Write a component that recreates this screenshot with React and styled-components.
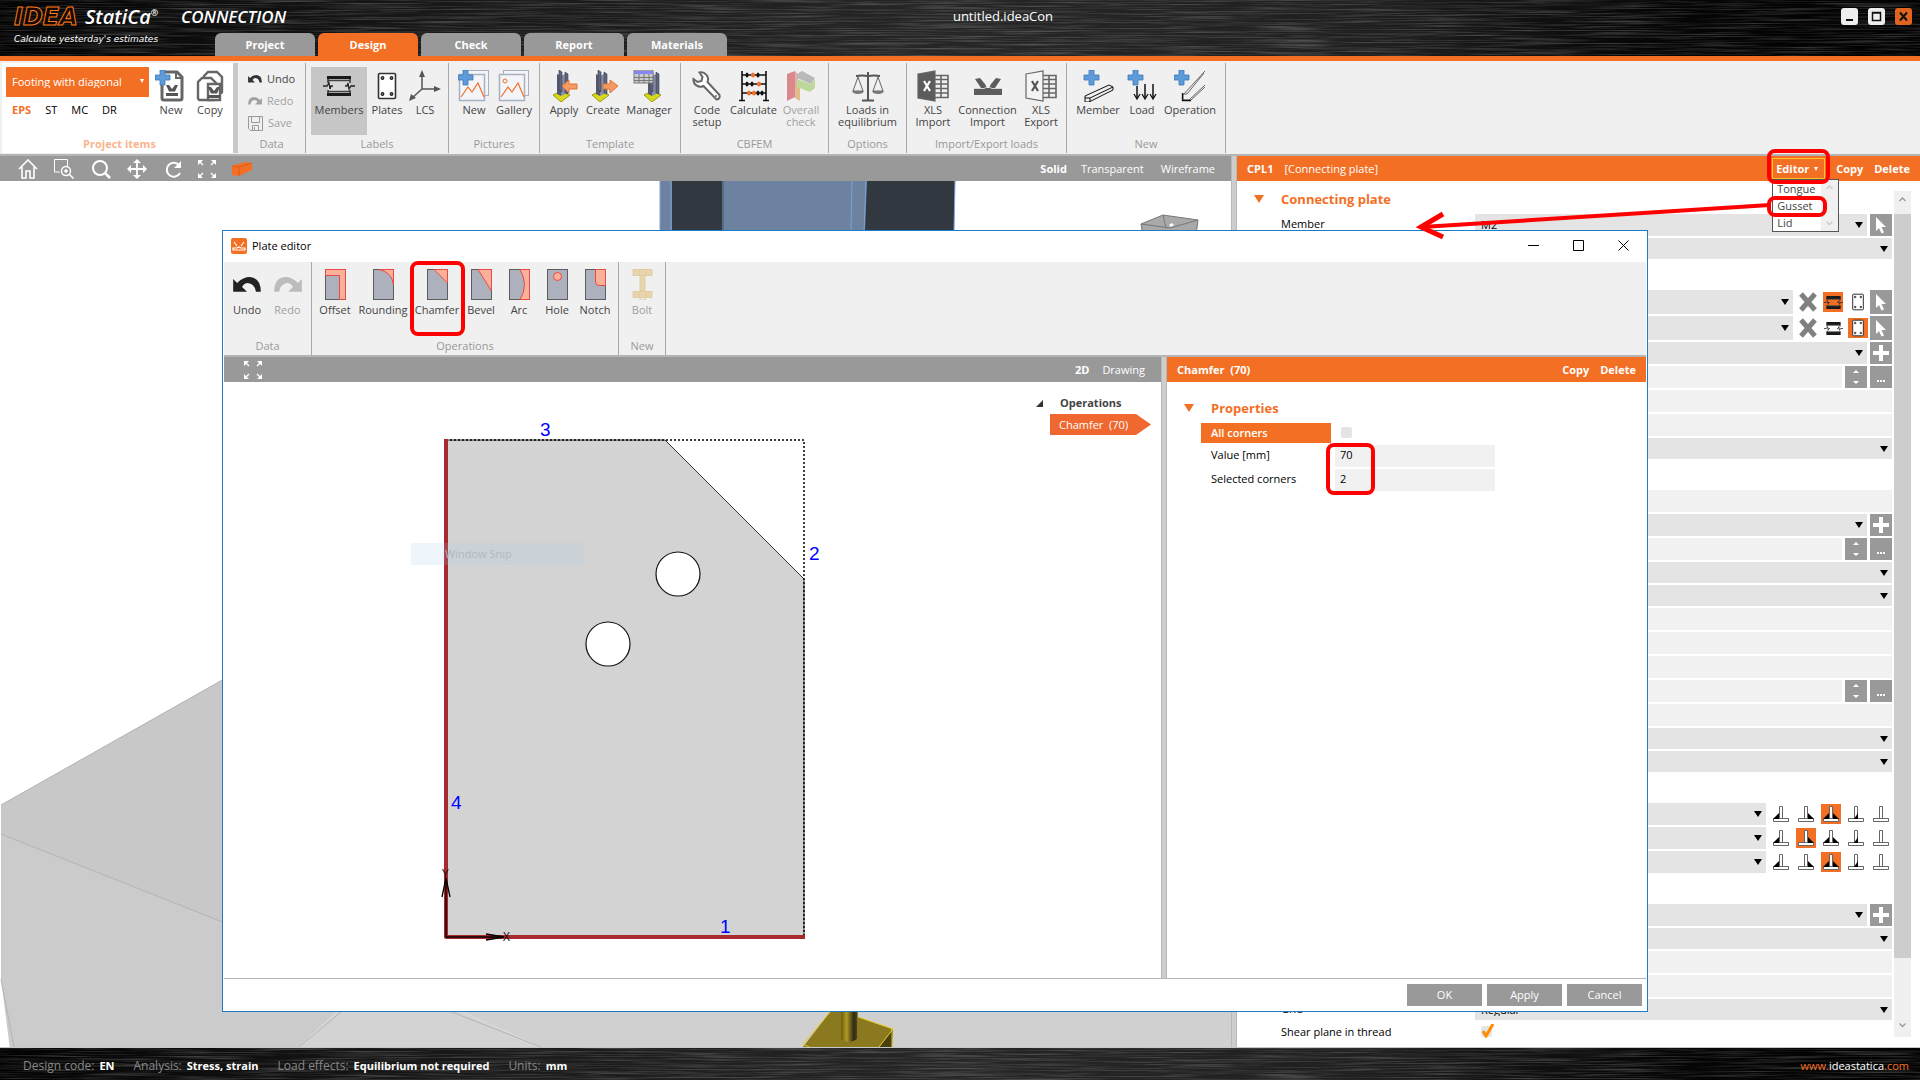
import React, { useState } from 'react';
import styled, { createGlobalStyle, css } from 'styled-components';

const orange = '#f36f24';
const grey = '#999999';
const red = '#ff0000';

const GlobalStyle = createGlobalStyle`
  * {
    box-sizing: border-box;
  }

  body {
    margin: 0;
    overflow: hidden;
    color: #444;
    background: #fff;
    font-family: "Open Sans", "Noto Sans", sans-serif;
    font-size: 11px;
    line-height: 12px;
  }

  button, input, select {
    font: inherit;
    color: inherit;
    margin: 0;
    padding: 0;
    border: 0;
    border-radius: 0;
    background: none;
    outline: none;
  }

  button {
    white-space: nowrap;
  }

  svg {
    display: block;
    flex: none;
  }

  ul {
    margin: 0;
    padding: 0;
    list-style: none;
  }
`;

const Page = styled.div`
  position: relative;
  display: flex;
  flex-direction: column;
  height: 100vh;
`;

/* Brushed metal bars */

const brushed = css`
  position: relative;
  background: linear-gradient(90deg, #020202 0%, #181818 22%, #262626 50%, #1f1f1f 72%, #060606 86%, #020202 100%);
`;

const TextureSvg = styled.svg`
  position: absolute;
  inset: 0;
  width: 100%;
  height: 100%;
`;

const Texture = ({ id }) => (
  <TextureSvg aria-hidden="true">
    <filter id={id} x="0" y="0" width="100%" height="100%">
      <feTurbulence type="fractalNoise" baseFrequency="0.012 0.85" numOctaves="3" seed="4" />
      <feColorMatrix values="0 0 0 0 1  0 0 0 0 1  0 0 0 0 1  2.4 0 0 0 -1" />
    </filter>
    <rect width="100%" height="100%" filter={`url(#${id})`} opacity="0.2" />
  </TextureSvg>
);

const Header = styled.header`
  ${brushed}
  height: 61px;
  border-bottom: 5px solid ${orange};
`;

const TitleRow = styled.div`
  position: relative;
  display: flex;
  height: 33px;
  color: #fff;
`;

const Brand = styled.div`
  width: 290px;
  padding: 4px 0 0 14px;
`;

const BrandName = styled.div`
  display: flex;
  align-items: center;
  height: 25px;
`;

const Idea = styled.span`
  width: 71px;
  font: italic bold 24px "DejaVu Sans", sans-serif;
  color: #140800;
  -webkit-text-stroke: 1px #ff7a1c;
`;

const Statica = styled.span`
  width: 96px;
  font: italic 600 20px "Open Sans", sans-serif;

  sup {
    font-size: 9px;
    vertical-align: 8px;
  }
`;

const Product = styled.span`
  font: italic 600 17px "Open Sans", sans-serif;
`;

const Tagline = styled.div`
  padding-top: 4px;
  font: italic 9px/12px "DejaVu Sans", sans-serif;
  white-space: nowrap;
`;

const FileName = styled.div`
  flex: 1;
  padding-top: 3px;
  font-size: 13px;
  line-height: 26px;
  text-align: center;
`;

const WindowButtons = styled.div`
  display: flex;
  justify-content: flex-end;
  gap: 10px;
  width: 204px;
  padding: 8px 8px 0 0;
`;

const WindowButton = styled.button`
  width: 17px;
  height: 17px;
  border-radius: 3px;
  color: #111;
  background: ${p => (p.$close ? '#e0641f' : '#eee')};
`;

const Tabs = styled.nav`
  position: relative;
  display: flex;
  gap: 3px;
  padding-left: 215px;
`;

const Tab = styled.button`
  width: 100px;
  height: 23px;
  border-radius: 6px 6px 0 0;
  color: #fff;
  font-weight: bold;
  background: ${p => (p.$active ? orange : grey)};
`;

/* Ribbon */

const RibbonBar = styled.div`
  display: flex;
  flex: none;
  padding: ${p => (p.$dialog ? '0' : '2px 0 1px')};
  border-bottom: 2px solid #b4b4b4;
  background: #f0f0f0;
`;

const Group = styled.section`
  display: flex;
  flex-direction: column;
  padding: 4px ${p => p.$pad ?? 5}px 0;
  border-right: 1px solid #a8a8a8;
`;

const GroupBody = styled.div`
  display: flex;
  height: ${p => (p.$tall ? 71 : 68)}px;
`;

const GroupName = styled.div`
  line-height: 18px;
  text-align: center;
  color: #999;
`;

const BigButton = styled.button`
  display: flex;
  flex-direction: column;
  align-items: center;
  gap: ${p => (p.$tall ? 4 : 2)}px;
  width: ${p => p.$w}px;
  padding-top: 3px;
  white-space: pre;
  color: ${p => (p.disabled ? '#a0a0a0' : '#444')};
  background: ${p => (p.$active ? '#c6c6c6' : 'none')};
  position: relative;

  svg {
    opacity: ${p => (p.disabled ? 0.55 : 1)};
  }
`;

const ProjectItems = styled.section`
  flex: none;
  width: 236px;
  margin-left: 2px;
  padding: 4px 0 0 4px;
  border-right: 5px solid #c8c8c8;
  background: #fff;
`;

const ProjectBody = styled.div`
  display: flex;
  height: 68px;
`;

const ProjectPick = styled.div`
  width: 145px;
  padding-right: 2px;
`;

const SelectBox = styled.div`
  position: relative;
  flex: 1;
  min-width: 0;

  select {
    display: block;
    width: 100%;
    height: 100%;
    padding: 0 6px;
    appearance: none;
    color: ${p => (p.$project ? '#fff' : '#000')};
    background: ${p => (p.$project ? orange : '#e4e4e4')};
  }

  &::after {
    content: "";
    position: absolute;
    right: ${p => (p.$project ? 5 : 4)}px;
    top: calc(50% - 3px);
    border: solid transparent;
    border-width: ${p => (p.$project ? '4px 2px 0' : '6px 4px 0')};
    border-top-color: ${p => (p.$project ? '#fff' : '#000')};
    pointer-events: none;
  }
`;

const ProjectSelect = styled(SelectBox)`
  height: 30px;
`;

const Kinds = styled.div`
  display: flex;
  gap: 14px;
  padding: 7px 6px;
`;

const Kind = styled.button`
  color: ${p => (p.$active ? orange : '#000')};
  font-weight: ${p => (p.$active ? 'bold' : 'normal')};
`;

const ProjectLabel = styled(GroupName)`
  color: #f9b48d;
  font-weight: bold;
`;

const SmallButtons = styled.div`
  display: flex;
  flex-direction: column;
  width: 57px;
  padding: 1px 0 0 5px;
`;

const SmallButton = styled.button`
  display: flex;
  align-items: center;
  gap: 5px;
  height: 22px;
  color: ${p => (p.disabled ? '#a0a0a0' : '#444')};
`;

/* Work area */

const Main = styled.main`
  display: flex;
  flex: 1;
  min-height: 0;
  border-bottom: 1px solid #c8c8c8;
`;

const Viewport = styled.section`
  display: flex;
  flex: 1;
  flex-direction: column;
  min-width: 0;
`;

const ViewBar = styled.div`
  display: flex;
  align-items: center;
  flex: none;
  height: 25px;
  padding: 0 16px;
  color: #fff;
  background: ${grey};
`;

const ViewIcon = styled.button`
  display: flex;
  justify-content: center;
  width: ${p => p.$w ?? 36}px;
`;

const ViewIcons = styled.div`
  display: flex;
  flex: 1;
  align-items: center;
  padding-left: ${p => p.$pad ?? 0}px;
`;

const ViewMode = styled.button`
  margin-left: ${p => p.$gap ?? 14}px;
  font-weight: ${p => (p.$active ? 'bold' : 'normal')};
`;

const Scene = styled.svg`
  flex: 1;
  width: 100%;
  min-height: 0;
`;

const Splitter = styled.div`
  flex: none;
  width: 6px;
  border: solid #b8b8b8;
  border-width: 0 1px;
  background: #cdcdcd;
`;

const Panel = styled.aside`
  display: flex;
  flex: none;
  flex-direction: column;
  width: ${p => p.$w};
`;

const PanelBar = styled.div`
  display: flex;
  align-items: center;
  flex: none;
  height: 25px;
  padding: 0 10px;
  color: #fff;
  background: ${orange};

  button {
    font-weight: bold;
  }
`;

const PanelTitle = styled.div`
  flex: 1;
  font-weight: bold;
  white-space: pre;

  span {
    padding-left: 11px;
    font-weight: normal;
  }
`;

const PanelAction = styled.button`
  margin-left: 11px;
`;

const EditorMenu = styled.div`
  position: relative;
  height: 21px;
`;

const EditorButton = styled.button`
  display: flex;
  align-items: center;
  justify-content: space-between;
  width: 53px;
  height: 21px;
  padding: 0 6px 0 3px;
  border: 1px solid #ffc423;

  &::after {
    content: "";
    border: solid transparent;
    border-width: 4px 2px 0;
    border-top-color: #fff;
  }
`;

const Popup = styled.div`
  position: absolute;
  z-index: 5;
  top: 21px;
  left: 0;
  display: flex;
  width: 67px;
  border: 1px solid #555;
  background: #fff;

  ul {
    flex: 1;
  }

  li {
    position: relative;
    height: 17px;
  }

  button {
    padding-left: 4px;
    color: #444;
    font-weight: normal;
    line-height: 17px;
  }
`;

const PopupScroll = styled.div`
  display: flex;
  flex-direction: column;
  justify-content: space-between;
  align-items: center;
  width: 17px;
  padding: 5px 0;
  background: #f0f0f0;
`;

const Mark = styled.span`
  position: absolute;
  z-index: 6;
  inset: ${p => p.$inset};
  border: 4px solid ${red};
  border-radius: 8px;
  pointer-events: none;
`;

const ArrowMark = styled.svg`
  position: absolute;
  z-index: 20;
  top: 42px;
  right: 100%;
  pointer-events: none;
`;

const PanelBody = styled.div`
  display: flex;
  flex: 1;
  min-height: 0;
  padding-right: 9px;
`;

const Fields = styled.div`
  flex: 1;
  min-width: 0;
  margin-bottom: 4px;
  overflow: hidden;
  padding: 0 2px 0 44px;
`;

const Heading = styled.h2`
  display: flex;
  align-items: center;
  gap: 17px;
  height: 33px;
  margin: 0 0 0 -27px;
  padding-top: 3px;
  color: ${orange};
  font-size: 13px;
  line-height: 18px;

  &::before {
    content: "";
    border: solid transparent;
    border-width: 8px 5px 0;
    border-top-color: ${orange};
  }
`;

const FieldSection = styled.div`
  margin-bottom: 31px;

  &:last-child {
    margin-bottom: 0;
  }
`;

const Row = styled.div`
  display: flex;
  height: ${p => p.$h ?? 22}px;
  color: #000;

  & + & {
    margin-top: 2px;
  }
`;

const RowLabel = styled.label`
  flex: none;
  width: 194px;
  line-height: 20px;
`;

const TextInput = styled.input`
  flex: 1;
  min-width: 0;
  padding: 0 5px 2px;
  background: #f1f1f1;
`;

const SquareButton = styled.button`
  display: flex;
  align-items: center;
  justify-content: center;
  width: 22px;
  margin-left: ${p => p.$gap ?? 3}px;
  color: #fff;
  background: ${grey};
`;

const IconSet = styled.div`
  display: flex;
  align-items: center;
  gap: 5px;
  padding: 0 ${p => p.$end ?? 1}px 0 5px;
`;

const IconButton = styled.button`
  display: flex;
  align-items: center;
  justify-content: center;
  width: 20px;
  height: 20px;
  background: ${p => (p.$active ? orange : 'none')};
`;

const Tick = styled.span`
  position: relative;
  padding: 4px 6px;

  input {
    display: block;
    width: 11px;
    height: 11px;
    border-radius: 2px;
    appearance: none;
    background: #e4e4e4;
  }

  svg {
    position: absolute;
    top: 2px;
    left: 7px;
    pointer-events: none;
  }
`;

const Scrollbar = styled.div`
  display: flex;
  flex-direction: column;
  flex: none;
  align-items: center;
  width: 17px;
  margin: 10px 0;
  background: #f0f0f0;
`;

const ScrollEnd = styled.button`
  display: flex;
  align-items: ${p => (p.$down ? 'center' : 'flex-start')};
  flex: none;
  height: 23px;
  padding: 6px 0;
`;

const Thumb = styled.div`
  flex: none;
  width: 17px;
  height: 88%;
  background: #cdcdcd;
`;

const Track = styled.div`
  flex: 1;
`;

/* Footer */

const Footer = styled.footer`
  ${brushed}
  display: flex;
  align-items: center;
  flex: none;
  height: 32px;
  padding: 4px 11px 0 23px;
  color: #888;

  dl {
    position: relative;
    display: flex;
    flex: 1;
    gap: 19px;
    margin: 0;
  }

  div {
    display: flex;
    gap: 5px;
  }

  dt {
    font-size: 12px;
  }

  dd {
    margin: 0;
    color: #fff;
    font-weight: bold;
  }

  a {
    position: relative;
    color: ${orange};
    font-size: 11px;
    text-decoration: none;
  }

  a span {
    color: #fff;
  }
`;

/* Plate editor window */

const Dialog = styled.div`
  position: absolute;
  z-index: 10;
  top: 230px;
  right: 272px;
  bottom: 68px;
  left: 222px;
  display: flex;
  flex-direction: column;
  padding: 0 1px;
  border: 1px solid #1b7cc9;
  background: #fff;
`;

const DialogTitle = styled.div`
  display: flex;
  align-items: center;
  gap: 5px;
  flex: none;
  height: 31px;
  padding: 0 17px 2px 7px;
  color: #000;
`;

const DialogName = styled.h1`
  flex: 1;
  margin: 0;
  font-size: 11px;
  font-weight: normal;
`;

const DialogControl = styled.button`
  margin-left: 29px;
`;

const DialogMain = styled.div`
  display: flex;
  flex: 1;
  min-height: 0;
  border-bottom: 1px solid #b4b4b4;
`;

const Canvas = styled.div`
  display: flex;
  flex: 1;
  min-height: 0;
`;

const PlateSvg = styled.svg`
  flex: 1;
  min-width: 0;
  height: 100%;
`;

const Tree = styled.div`
  width: 125px;
  padding-top: 13px;
`;

const TreeRoot = styled.div`
  display: flex;
  align-items: center;
  gap: 17px;
  height: 16px;
  color: #444;
  font-weight: bold;
`;

const TreeItem = styled.button`
  display: block;
  width: 101px;
  height: 21px;
  margin: 3px 0 0 14px;
  padding-left: 9px;
  color: #fff;
  text-align: left;
  white-space: pre;
  background: #f0682f;
  clip-path: polygon(0 0, 86px 0, 100% 50%, 86px 100%, 0 100%);
`;

const Properties = styled.div`
  padding: 8px 0 0 44px;
`;

const PropRow = styled.div`
  display: flex;
  width: 294px;
  height: 22px;
  margin: 0 0 2px -10px;
  color: #000;

  label {
    width: 130px;
    height: 20px;
    margin-right: 4px;
    padding-left: 10px;
    line-height: 20px;
    color: ${p => (p.$active ? '#fff' : '#000')};
    font-weight: ${p => (p.$active ? 600 : 'normal')};
    background: ${p => (p.$active ? orange : 'none')};
  }
`;

const PropRows = styled.div`
  position: relative;
  width: 284px;
  margin-top: -2px;
`;

const DialogButtons = styled.div`
  display: flex;
  justify-content: flex-end;
  gap: 5px;
  flex: none;
  padding: 5px 4px;

  button {
    width: 75px;
    height: 22px;
    color: #fff;
    background: ${grey};
  }
`;

/* Icons */

const Svg = ({ w = 32, h = w, children, ...rest }) => (
  <svg width={w} height={h} viewBox={`0 0 ${w} ${h}`} fill="none" aria-hidden="true" {...rest}>
    {children}
  </svg>
);

const Plus = ({ x = 0, y = 0 }) => (
  <path
    transform={`translate(${x} ${y})`}
    d="M5 0h5v5h5v5h-5v5H5v-5H0V5h5z"
    fill="#5f9bd8"
    stroke="#3a78bb"
    strokeWidth="0.8"
  />
);

const FileMark = ({ x, y }) => (
  <path transform={`translate(${x} ${y})`} d="M0 8h12v3H0zM0 0l3 0 3 4 3-4h3L9 6.500H3z" fill="#555" />
);

const NewFileIcon = () => (
  <Svg>
    <path d="M9 2h13l5 5v21q0 2-2 2H9q-2 0-2-2V4q0-2 2-2z" fill="#fff" stroke="#666" strokeWidth="3" />
    <path d="M21 2v6h6" stroke="#666" strokeWidth="2" />
    <FileMark x="11" y="15" />
    <Plus x="0" y="0" />
  </Svg>
);

const CopyIcon = () => (
  <Svg>
    <path d="M14 2h9l5 5v15q0 1-1 1H10V6z" fill="#fff" stroke="#666" strokeWidth="2.400" />
    <path d="M9 8h9l5 5v15q0 2-2 2H7q-2 0-2-2V12z" transform="translate(-1 0)" fill="#fff" stroke="#666" strokeWidth="2.400" />
    <path d="M14 14h12v16H14z" fill="#fff" stroke="#666" strokeWidth="2.400" />
    <FileMark x="14" y="17" />
  </Svg>
);

const MembersIcon = ({ size = 32 }) => (
  <svg width={size} height={size} viewBox="0 0 32 32" fill="none" aria-hidden="true">
    <path d={size < 32 ? 'M4 5h24v5H4zM4 22h24v5H4z' : 'M4 6h24v3H4zM4 23h24v3H4z'} fill="#1a1a1a" />
    <path d="M5 10h22v12H5z" fill={size < 32 ? 'none' : '#d8d8d8'} />
    <path d="M5 10.500h22M5 21.500h22" stroke="#444" strokeWidth="1.500" />
    <path d="M0 16h4l2-3 1 6 1-3h2M22 16h2l1-3 1 6 2-3h4M5 9v4M5 20v3M27 9v4M27 20v3" stroke="#222" strokeWidth="1.300" />
  </svg>
);

const PlatesIcon = ({ size = 32 }) => (
  <svg width={size} height={size} viewBox="0 0 32 32" fill="none" aria-hidden="true">
    <rect x="7.500" y="3.500" width="17" height="25" rx="1" fill="#fff" stroke="#333" strokeWidth="1.600" />
    <g fill="#888" stroke="#222" strokeWidth="1.200">
      <circle cx="11.500" cy="8" r="1.300" />
      <circle cx="20.500" cy="8" r="1.300" />
      <circle cx="11.500" cy="24" r="1.300" />
      <circle cx="20.500" cy="24" r="1.300" />
    </g>
  </svg>
);

const LcsIcon = () => (
  <Svg>
    <path d="M13 5v14h15M13 19L3 28" stroke="#555" strokeWidth="1.500" />
    <path d="M13 0l3 7h-6zM32 19l-7 3v-6zM0 31l2-7 5 4z" fill="#555" />
  </Svg>
);

const PictureIcon = ({ add }) => (
  <Svg>
    <rect x="5.500" y="0.500" width="25" height="25" fill="#f4f5f8" stroke="#a8b0c4" />
    <rect x="1.500" y="4.500" width="25" height="26" fill="#f4f5f8" stroke="#a8b0c4" strokeWidth="1.500" />
    <path d="M3 27L10 17l4 5 6-9 6 14" stroke={orange} strokeWidth="1.200" />
    {add ? <Plus /> : <circle cx="7" cy="11" r="2" stroke={orange} />}
  </Svg>
);

const ColumnShape = ({ x = 0 }) => (
  <g transform={`translate(${x} 0)`}>
    <path d="M2 25l8-4 9 4-9 7z" fill="#d7d81c" stroke="#9c9c14" />
    <path d="M6 4l4 2v20l-4-2z" fill="#555a70" />
    <path d="M10 6l4-2v20l-4 2z" fill="#8a8fa8" />
    <path d="M8 0l3 2v20l-3-2zM14 2l3 2v20l-3-1z" fill="#60657c" stroke="#3d4257" strokeWidth="0.600" />
  </g>
);

const ApplyIcon = () => (
  <Svg>
    <ColumnShape x={3} />
    <path d="M14 16l7-6v4h8v5h-8v4z" fill="#f59a62" stroke="#dd7637" />
  </Svg>
);

const CreateIcon = () => (
  <Svg>
    <ColumnShape x={3} />
    <path d="M31 16l-8-6v4h-7v5h7v4z" fill="#f59a62" stroke="#dd7637" />
  </Svg>
);

const ManagerIcon = () => (
  <Svg>
    <ColumnShape x={9} />
    <rect x="1" y="0" width="19" height="13" fill="#ccc" stroke="#777" />
    <path d="M1 1h19v3H1z" fill="#8686f2" />
    <path d="M1 7.500h19M1 10.500h19M6 4v9M11 4v9M16 4v9" stroke="#777" />
  </Svg>
);

const WrenchIcon = () => (
  <Svg>
    <path
      d="M9 2.500a7 7 0 0 1 8 9.500L29 25q1 4-3 4.500L13 16A7 7 0 0 1 3 9l4 3 4-1 1-4z"
      transform="translate(-0.500 0)"
      fill="#fff"
      stroke="#666"
      strokeWidth="2"
    />
    <circle cx="25" cy="26" r="1" fill="#666" />
  </Svg>
);

const AbacusIcon = () => (
  <Svg>
    <path d="M4 1v29M28 1v29M4 5h24M4 14h24M4 23h24M1 30.500h6M25 30.500h6" stroke="#111" strokeWidth="1.600" />
    <g fill="#111">
      <ellipse cx="9" cy="5" rx="1.500" ry="2.500" />
      <ellipse cx="20" cy="5" rx="1.500" ry="2.500" />
      <ellipse cx="9" cy="14" rx="1.500" ry="2.500" />
      <ellipse cx="14" cy="14" rx="1.500" ry="2.500" />
      <ellipse cx="20" cy="23" rx="1.500" ry="2.500" />
      <ellipse cx="24" cy="23" rx="1.500" ry="2.500" />
    </g>
    <g fill={orange}>
      <ellipse cx="15" cy="5" rx="2" ry="2.500" />
      <ellipse cx="21" cy="14" rx="2" ry="2.500" />
      <ellipse cx="11" cy="23" rx="2" ry="2.500" />
      <ellipse cx="16" cy="23" rx="2" ry="2.500" />
    </g>
  </Svg>
);

const OverallIcon = () => (
  <Svg>
    <path d="M2 4l8-3v26l-8 4z" fill="#c8343f" />
    <path d="M10 1l3 3v24l-3-1z" fill="#e2777c" />
    <path d="M10 12l5 3v16l-5-3z" fill="#d3903c" />
    <path d="M12 4l5-3 13 7-4 6-14-6z" fill="#8d8d8d" />
    <path d="M12 9l14 5 4-5v9l-5 4-13-5z" fill="#94c655" />
  </Svg>
);

const ScalesIcon = () => (
  <Svg>
    <path d="M16 2v28M10 30.500h12M4 6q6-1 12 0 6-1 12 0" stroke="#555" strokeWidth="2" />
    <path d="M6 7L1 21h10zM26 7l-5 14h10z" stroke="#666" />
    <path d="M0 21h12q-1 3-6 3t-6-3zM20 21h12q-1 3-6 3t-6-3z" fill="#777" />
  </Svg>
);

const XlsIcon = ({ outline }) => (
  <Svg>
    <path d="M17 5.500h14v22H17M17 9.500h14M17 14h14M17 18.500h14M17 23h14M24 5v22" stroke="#666" strokeWidth="1.600" />
    <path d="M1 4l17-3v30L1 28z" fill={outline ? '#f4f4f4' : '#5c5c5c'} stroke="#666" strokeWidth="1.200" />
    <path d="M7 11l6 10M13 11L7 21" stroke={outline ? '#555' : '#fff'} strokeWidth="2.200" />
  </Svg>
);

const ConnectionIcon = () => (
  <Svg>
    <path d="M2 18h28v7H2zM3 9l5-1 5 6 2 4h2l2-4 5-6 5 1-6 9H9z" fill="#5c5c5c" />
    <path d="M2 18.500h10l4-2 4 2h10" stroke="#f0f0f0" strokeWidth="0.800" />
  </Svg>
);

const MemberIcon = () => (
  <Svg>
    <path d="M3 28v4h4l24-12v-3l-4-2L3 26z" fill="#eee" stroke="#111" />
    <path d="M3 28h5v4M8 28l23-11" stroke="#111" />
    <Plus x="2" />
  </Svg>
);

const LoadIcon = () => (
  <Svg>
    <path d="M11 16v12M19 14v14M27 14v14" stroke="#111" strokeWidth="1.500" />
    <path d="M8 24l3 5 3-5M16 24l3 5 3-5M24 24l3 5 3-5" stroke="#111" strokeWidth="1.300" />
    <Plus x="2" />
  </Svg>
);

const OperationIcon = () => (
  <Svg>
    <path d="M31 1L9 25v5h6L31 15M9 24h4l17-21M17 30L31 17" stroke="#666" />
    <path d="M8.500 23v7.500H17" stroke="#111" strokeWidth="1.300" />
    <Plus x="0" />
  </Svg>
);

const ARROW_SHAPE = 'M0 2l4 4Q10 0 17 0q11 1 11 15h-5Q22 7 15 6q-4 0-6 4l5 5H0z';

const UndoIcon = ({ w = 14, fill = '#333' }) => (
  <svg width={w} height={w * 0.6} viewBox="0 0 28 17" aria-hidden="true">
    <path d={ARROW_SHAPE} fill={fill} />
  </svg>
);

const RedoIcon = ({ w = 14, fill = '#a0a0a0' }) => (
  <svg width={w} height={w * 0.6} viewBox="0 0 28 17" aria-hidden="true">
    <path d={ARROW_SHAPE} fill={fill} transform="matrix(-1 0 0 1 28 0)" />
  </svg>
);

const SaveIcon = () => (
  <Svg w={15}>
    <path d="M0.500 0.500h14v14h-12l-2-2zM3.500 0.500v6h8v-6M4.500 14.500v-5h6v5M6.500 11v3" stroke="#999" />
  </Svg>
);

const HomeIcon = () => (
  <Svg w={20}>
    <path d="M1 10l9-9 9 9M4 8v11h4v-7h4v7h4V8" stroke="#fff" strokeWidth="1.600" />
  </Svg>
);

const ZoomWindowIcon = () => (
  <Svg w={20}>
    <path d="M6 13H0.500V0.500h13V8" stroke="#fff" />
    <circle cx="12" cy="12" r="4.500" stroke="#fff" strokeWidth="1.500" />
    <path d="M12 10v4M10 12h4M15 15l4.500 4.500" stroke="#fff" strokeWidth="1.500" />
  </Svg>
);

const SearchIcon = () => (
  <Svg w={20}>
    <circle cx="9" cy="9" r="7" stroke="#fff" strokeWidth="2" />
    <path d="M14 14l5 5" stroke="#fff" strokeWidth="2.500" />
  </Svg>
);

const MoveIcon = () => (
  <Svg w={20}>
    <path d="M10 2v16M2 10h16" stroke="#fff" strokeWidth="1.800" />
    <path d="M10 0l4 4H6zM10 20l4-4H6zM0 10l4-4v8zM20 10l-4-4v8z" fill="#fff" />
  </Svg>
);

const RotateIcon = () => (
  <Svg w={20}>
    <path d="M15 6a7 7 0 1 0 1 8" stroke="#fff" strokeWidth="2" />
    <path d="M17 2v7h-7z" fill="#fff" />
  </Svg>
);

const ExpandIcon = () => (
  <Svg w={20}>
    <path d="M2 2l4 4M18 2l-4 4M2 18l4-4M18 18l-4-4" stroke="#fff" strokeWidth="1.400" />
    <path d="M1 1h5L1 6zM19 1h-5l5 5zM1 19h5l-5-5zM19 19h-5l5-5z" fill="#fff" />
  </Svg>
);

const SolidIcon = () => (
  <Svg w={20} h={14}>
    <path d="M0 4l13-4 7 1v7l-13 6-7-1z" fill={orange} />
    <path d="M0 4l7 1v9M7 5l13-4" stroke="#d85e18" />
  </Svg>
);

const CursorIcon = () => (
  <Svg w={12} h={18}>
    <path d="M1 1v14l3-3 2.500 5.500 2.500-1L6.500 11H11z" fill="#fff" />
  </Svg>
);

const AddIcon = () => (
  <Svg w={16}>
    <path d="M6 0h4v6h6v4h-6v6H6v-6H0V6h6z" fill="#fff" />
  </Svg>
);

const SpinIcon = () => (
  <Svg w={6} h={16}>
    <path d="M0 4l3-3 3 3zM0 12l3 3 3-3z" fill="#fff" />
  </Svg>
);

const DotsIcon = () => (
  <Svg w={8} h={10}>
    <path d="M0 8h2v2H0zM3 8h2v2H3zM6 8h2v2H6z" fill="#fff" />
  </Svg>
);

const CrossIcon = () => (
  <Svg w={20}>
    <path d="M3 2l14 16M17 2L3 18" stroke="#808080" strokeWidth="5" />
  </Svg>
);

const Chevron = ({ down, color = '#999' }) => (
  <Svg w={7} h={5}>
    <path d={down ? 'M0.500 0.500l3 3 3-3' : 'M0.500 4l3-3 3 3'} stroke={color} strokeWidth="1.300" />
  </Svg>
);

// Fillet drawn beside the stem: left, right, both, bevel, none
const WELDS = ['M6 7v6H0z', 'M10 7v6h6z', 'M6 7v6H0zM10 7v6h6z', 'M10 7v6H6z', ''];

const WeldIcon = ({ kind }) => (
  <Svg w={16}>
    <path d="M6.500 0.500h3v12h6v3h-15v-3h6z" fill="#fff" stroke="#666" />
    <path d="M0.500 12.500h15" stroke="#666" />
    <path d={WELDS[kind]} fill="#000" />
  </Svg>
);

const CUTS = {
  Offset: 'M0.500 0.500h20v30h-6V6.500h-14z',
  Rounding: 'M6 0.500h14.500V16Q19 3 6 0.500z',
  Chamfer: 'M7 0.500h13.500V14z',
  Bevel: 'M7 0.500h13.500V22z',
  Arc: 'M11 0.500h9.500v30H11Q20 16 11 0.500z',
  Hole: 'M10.500 3.500a4 4 0 1 1 0 8 4 4 0 1 1 0-8z',
  Notch: 'M10.500 0.500h10v16H15q-4.500 0-4.500-4.500z',
};

const CutIcon = ({ name }) => (
  <Svg w={21} h={31}>
    <rect x="0.500" y="0.500" width="20" height="30" fill="#adb1bd" stroke="#5c5c5c" />
    <path d={CUTS[name]} fill="#fbb09a" stroke="#e84a45" />
  </Svg>
);

const BoltIcon = () => (
  <Svg w={21} h={31}>
    <path d="M8 6h5v16H8z" fill="#e5c078" stroke="#d6ae62" />
    <path d="M1 0.500h19v6H1zM1 22.500h19v6H1z" fill="#e5c078" stroke="#d6ae62" />
    <path d="M7 0v6M14 0v6M7 22v6M14 22v6M8 28v3h5v-3" stroke="#d6ae62" />
  </Svg>
);

const AppIcon = () => (
  <Svg w={16}>
    <rect width="16" height="16" rx="2" fill={orange} />
    <path d="M2 10h4l2-1 2 1h4v2H2zM3 4l3 4M13 4l-3 4" stroke="#fff" strokeWidth="1.200" />
  </Svg>
);

/* Content */

const TABS = ['Project', 'Design', 'Check', 'Report', 'Materials'];

const RIBBON = [
  {
    name: 'Labels',
    items: [
      { label: 'Members', w: 56, icon: <MembersIcon />, active: true },
      { label: 'Plates', w: 40, icon: <PlatesIcon /> },
      { label: 'LCS', w: 36, icon: <LcsIcon /> },
    ],
  },
  {
    name: 'Pictures',
    items: [
      { label: 'New', w: 40, icon: <PictureIcon add /> },
      { label: 'Gallery', w: 40, icon: <PictureIcon /> },
    ],
  },
  {
    name: 'Template',
    items: [
      { label: 'Apply', w: 38, icon: <ApplyIcon /> },
      { label: 'Create', w: 40, icon: <CreateIcon /> },
      { label: 'Manager', w: 52, icon: <ManagerIcon /> },
    ],
  },
  {
    name: 'CBFEM',
    items: [
      { label: 'Code\nsetup', w: 42, icon: <WrenchIcon /> },
      { label: 'Calculate', w: 51, icon: <AbacusIcon /> },
      { label: 'Overall\ncheck', w: 44, icon: <OverallIcon />, disabled: true },
    ],
  },
  {
    name: 'Options',
    items: [{ label: 'Loads in\nequilibrium', w: 67, icon: <ScalesIcon /> }],
  },
  {
    name: 'Import/Export loads',
    items: [
      { label: 'XLS\nImport', w: 42, icon: <XlsIcon /> },
      { label: 'Connection\nImport', w: 67, icon: <ConnectionIcon /> },
      { label: 'XLS\nExport', w: 40, icon: <XlsIcon outline /> },
    ],
  },
  {
    name: 'New',
    items: [
      { label: 'Member', w: 52, icon: <MemberIcon /> },
      { label: 'Load', w: 36, icon: <LoadIcon /> },
      { label: 'Operation', w: 60, icon: <OperationIcon /> },
    ],
  },
];

const DIALOG_RIBBON = [
  {
    name: 'Data',
    items: [
      { label: 'Undo', w: 40, icon: <Svg w={28} h={31}><g transform="translate(0 8)"><UndoIcon w={28} fill="#222" /></g></Svg> },
      { label: 'Redo', w: 41, icon: <Svg w={28} h={31}><g transform="translate(0 8)"><RedoIcon w={28} fill="#444" /></g></Svg>, disabled: true },
    ],
  },
  {
    name: 'Operations',
    items: [
      { label: 'Offset', w: 40 },
      { label: 'Rounding', w: 56 },
      { label: 'Chamfer', w: 52, marked: true },
      { label: 'Bevel', w: 36 },
      { label: 'Arc', w: 40 },
      { label: 'Hole', w: 36 },
      { label: 'Notch', w: 40 },
    ],
  },
  {
    name: 'New',
    items: [{ label: 'Bolt', w: 40, icon: <BoltIcon />, disabled: true }],
  },
];

const SECTIONS = [
  [
    { type: 'pick', label: 'Member', value: 'M2' },
    { type: 'select' },
  ],
  [
    { type: 'item', active: 'member' },
    { type: 'item', active: 'plate' },
    { type: 'add' },
    { type: 'spin' },
    { type: 'text' },
    { type: 'text' },
    { type: 'select' },
  ],
  [
    { type: 'text' },
    { type: 'add' },
    { type: 'spin' },
    { type: 'select' },
    { type: 'select' },
    { type: 'text' },
    { type: 'text' },
    { type: 'text' },
    { type: 'spin' },
    { type: 'text' },
    { type: 'select' },
    { type: 'select' },
  ],
  [
    { type: 'weld', active: 2 },
    { type: 'weld', active: 1 },
    { type: 'weld', active: 2 },
  ],
  [
    { type: 'add' },
    { type: 'select' },
    { type: 'text' },
    { type: 'text' },
    { type: 'select', label: 'Grid', value: 'Regular' },
    { type: 'check', label: 'Shear plane in thread' },
  ],
];

const ROW_HEIGHTS = { select: 21, item: 24 };

const STATUS = [
  ['Design code:', 'EN'],
  ['Analysis:', 'Stress, strain'],
  ['Load effects:', 'Equilibrium not required'],
  ['Units:', 'mm'],
];

const RibbonGroup = ({ group, pad, tall }) => (
  <Group $pad={pad}>
    <GroupBody $tall={tall}>
      {group.items.map(item => (
        <BigButton key={item.label} $w={item.w} $tall={tall} $active={item.active} disabled={item.disabled}>
          {item.icon ?? <CutIcon name={item.label} />}
          {item.label}
          {item.marked && <Mark $inset="-5px -2px 1px -1px" />}
        </BigButton>
      ))}
    </GroupBody>
    <GroupName>{group.name}</GroupName>
  </Group>
);

const Ribbon = () => (
  <RibbonBar>
    <ProjectItems>
      <ProjectBody>
        <ProjectPick>
          <ProjectSelect $project>
            <select aria-label="Project item">
              <option>Footing with diagonal</option>
            </select>
          </ProjectSelect>
          <Kinds>
            <Kind $active>EPS</Kind>
            <Kind>ST</Kind>
            <Kind>MC</Kind>
            <Kind>DR</Kind>
          </Kinds>
        </ProjectPick>
        <BigButton $w={40}><NewFileIcon />New</BigButton>
        <BigButton $w={38}><CopyIcon />Copy</BigButton>
      </ProjectBody>
      <ProjectLabel>Project items</ProjectLabel>
    </ProjectItems>
    <Group>
      <GroupBody>
        <SmallButtons>
          <SmallButton><UndoIcon />Undo</SmallButton>
          <SmallButton disabled><RedoIcon />Redo</SmallButton>
          <SmallButton disabled><SaveIcon />Save</SmallButton>
        </SmallButtons>
      </GroupBody>
      <GroupName>Data</GroupName>
    </Group>
    {RIBBON.map(group => <RibbonGroup key={group.name} group={group} />)}
  </RibbonBar>
);

const Field = ({ row, id }) => {
  const { type, value } = row;
  const name = row.label ? undefined : type;
  const isSelect = !['spin', 'text', 'check'].includes(type);

  return (
    <Row $h={ROW_HEIGHTS[type]}>
      <RowLabel htmlFor={id}>{row.label}</RowLabel>
      {isSelect && (
        <SelectBox>
          <select id={id} aria-label={name}>
            <option>{value}</option>
          </select>
        </SelectBox>
      )}
      {(type === 'spin' || type === 'text') && <TextInput id={id} aria-label={name} />}
      {type === 'check' && (
        <Tick>
          <input id={id} type="checkbox" defaultChecked />
          <Svg w={14} h={14}>
            <path d="M1 7l3 5L11 0" stroke="#ff8c00" strokeWidth="3" />
          </Svg>
        </Tick>
      )}
      {type === 'pick' && <SquareButton aria-label="Pick"><CursorIcon /></SquareButton>}
      {type === 'add' && <SquareButton aria-label="Add"><AddIcon /></SquareButton>}
      {type === 'spin' && (
        <>
          <SquareButton aria-label="Step"><SpinIcon /></SquareButton>
          <SquareButton aria-label="More"><DotsIcon /></SquareButton>
        </>
      )}
      {type === 'item' && (
        <>
          <IconSet $end={2}>
            <IconButton aria-label="Remove"><CrossIcon /></IconButton>
            <IconButton aria-label="Member" $active={row.active === 'member'}><MembersIcon size={19} /></IconButton>
            <IconButton aria-label="Plate" $active={row.active === 'plate'}><PlatesIcon size={20} /></IconButton>
          </IconSet>
          <SquareButton $gap={0} aria-label="Pick"><CursorIcon /></SquareButton>
        </>
      )}
      {type === 'weld' && (
        <IconSet>
          {WELDS.map((_, kind) => (
            <IconButton key={kind} aria-label={`Weld ${kind + 1}`} $active={row.active === kind}>
              <WeldIcon kind={kind} />
            </IconButton>
          ))}
        </IconSet>
      )}
    </Row>
  );
};

const PropertyPanel = () => (
  <Panel $w="683px">
    <PanelBar>
      <PanelTitle>CPL1<span>[Connecting plate]</span></PanelTitle>
      <EditorMenu>
        <EditorButton>Editor</EditorButton>
        <Mark $inset="-9px -5px -5px -5px" />
        <Popup>
          <ul>
            <li><button>Tongue</button></li>
            <li><button>Gusset</button><Mark $inset="-1px -6px -3px -6px" /></li>
            <li><button>Lid</button></li>
          </ul>
          <PopupScroll>
            <Chevron color="#ccc" />
            <Chevron down color="#ccc" />
          </PopupScroll>
        </Popup>
        <ArrowMark width="360" height="42" fill="none" stroke={red} strokeWidth="4">
          <path d="M358 5L10 27" />
          <path d="M31 14L9 27l22 10" strokeWidth="5" />
        </ArrowMark>
      </EditorMenu>
      <PanelAction>Copy</PanelAction>
      <PanelAction>Delete</PanelAction>
    </PanelBar>
    <PanelBody>
      <Fields>
        <Heading>Connecting plate</Heading>
        {SECTIONS.map((rows, s) => (
          <FieldSection key={s}>
            {rows.map((row, i) => <Field key={i} row={row} id={`field-${s}-${i}`} />)}
          </FieldSection>
        ))}
      </Fields>
      <Scrollbar>
        <ScrollEnd aria-label="Scroll up"><Chevron /></ScrollEnd>
        <Thumb />
        <Track />
        <ScrollEnd $down aria-label="Scroll down"><Chevron down /></ScrollEnd>
      </Scrollbar>
    </PanelBody>
  </Panel>
);

const Model = () => (
  <Scene aria-hidden="true">
    <defs>
      <linearGradient id="rod">
        <stop offset="0" stopColor="#6b5c10" />
        <stop offset="0.35" stopColor="#b09a22" />
        <stop offset="0.8" stopColor="#2e2a14" />
        <stop offset="1" stopColor="#4b4420" />
      </linearGradient>
    </defs>
    <path d="M1 624L240 489V900H14L1 798z" fill="#cbcbcb" />
    <path d="M1 624L240 489V748L1 653z" fill="#c8c8c8" />
    <path d="M240 820H348L299 866V900H200z" fill="#cbcbcb" />
    <path d="M438 820H1231V900H541V866z" fill="#d0d0d0" />
    <path d="M348 820L299 866v34H541V866L438 820z" fill="#d3d3d3" />
    <path d="M1 624L240 489M1 653L240 748M1 798L14 866M341 831L299 866M452 831L541 866" stroke="#b4b4b4" fill="none" />
    <path d="M830 831L803 866H879L893 848L858 836V831z" fill="#8b7920" />
    <path d="M893 848L879 866H892z" fill="#4b4012" />
    <path d="M830 831L803 863l8 4M858 836l35 12L879 866M892 848v18" stroke="#e8cc1c" fill="none" />
    <path d="M841 831h16v27q-8 6-16 0z" fill="url(#rod)" />
    <path d="M660 0h294v50H660z" fill="#6c82a0" />
    <path d="M672 0h52v50h-52zM867 0h88l-1 50h-89z" fill="#31383f" />
    <path d="M660 0v50M671 0v50M852 0l-1 50M866 0l-2 50M955 0l-1 50M723 0v50" stroke="#7ba3d4" fill="none" />
    <path d="M1141 43l22-9 35 5-2 16h-53z" fill="#a9a9a9" stroke="#777" />
    <path d="M1141 43l29 4 28-8M1163 34l3 13" stroke="#777" fill="none" />
    <path d="M1169 44l3-2 2 2-3 2z" fill="#fff" />
  </Scene>
);

const Plate = () => (
  <PlateSvg role="img" aria-label="Plate">
    <path d="M222 58H441L580 197V555H222z" fill="#d3d3d3" />
    <path d="M222 58H441L580 197V555" stroke="#333" fill="none" />
    <path d="M222 58H580V555" stroke="#000" strokeWidth="1.500" strokeDasharray="2 2" fill="none" />
    <path d="M222 57V555H581" stroke="#a82a2e" strokeWidth="4" strokeLinejoin="round" fill="none" />
    <g fill="#fff" stroke="#111" strokeWidth="1.200">
      <circle cx="454" cy="192" r="22" />
      <circle cx="384" cy="262" r="22" />
    </g>
    <g stroke="#000" strokeWidth="1.300" fill="none">
      <path d="M222 500V555H275" />
      <path d="M218 515l4-19 4 19M262 552l18 3-18 3" />
    </g>
    <rect x="187" y="161" width="173" height="22" fill="#9ecbf0" opacity="0.180" />
    <g fontFamily="Liberation Sans, sans-serif" fontSize="19" fill="#0000ff">
      <text x="316" y="54">3</text>
      <text x="585" y="178">2</text>
      <text x="227" y="427">4</text>
      <text x="496" y="551">1</text>
    </g>
    <g fontSize="12" fill="#111">
      <text x="218" y="496">Y</text>
      <text x="279" y="559">X</text>
    </g>
    <text x="221" y="176" fontSize="11" fill="#b4b8bb">Window Snip</text>
  </PlateSvg>
);

const PlateEditor = () => {
  const [allCorners, setAllCorners] = useState(false);
  const [value, setValue] = useState('70');
  const [corners, setCorners] = useState('2');

  return (
    <Dialog role="dialog" aria-label="Plate editor">
      <DialogTitle>
        <AppIcon />
        <DialogName>Plate editor</DialogName>
        <DialogControl aria-label="Minimize"><Svg w={11}><path d="M0 5.500h11" stroke="#000" /></Svg></DialogControl>
        <DialogControl aria-label="Maximize"><Svg w={11}><path d="M0.500 0.500h10v10h-10z" stroke="#000" /></Svg></DialogControl>
        <DialogControl aria-label="Close"><Svg w={11}><path d="M0.500 0.500l10 10M10.500 0.500l-10 10" stroke="#000" /></Svg></DialogControl>
      </DialogTitle>
      <RibbonBar $dialog>
        {DIALOG_RIBBON.map(group => <RibbonGroup key={group.name} group={group} pad={3} tall />)}
      </RibbonBar>
      <DialogMain>
        <Viewport>
          <ViewBar>
            <ViewIcons $pad={3}><ViewIcon $w={20} aria-label="Fit"><ExpandIcon /></ViewIcon></ViewIcons>
            <ViewMode $active>2D</ViewMode>
            <ViewMode $gap={13}>Drawing</ViewMode>
          </ViewBar>
          <Canvas>
            <Plate />
            <Tree>
              <TreeRoot>
                <Svg w={7}><path d="M7 0v7H0z" fill="#333" /></Svg>
                Operations
              </TreeRoot>
              <TreeItem>Chamfer  (70)</TreeItem>
            </Tree>
          </Canvas>
        </Viewport>
        <Splitter />
        <Panel $w="479px">
          <PanelBar>
            <PanelTitle>Chamfer  (70)</PanelTitle>
            <PanelAction>Copy</PanelAction>
            <PanelAction>Delete</PanelAction>
          </PanelBar>
          <Properties>
            <Heading>Properties</Heading>
            <PropRow $active>
              <label htmlFor="all-corners">All corners</label>
              <Tick>
                <input
                  id="all-corners"
                  type="checkbox"
                  checked={allCorners}
                  onChange={e => setAllCorners(e.target.checked)}
                />
              </Tick>
            </PropRow>
            <PropRows>
              <PropRow>
                <label htmlFor="value">Value [mm]</label>
                <TextInput id="value" value={value} onChange={e => setValue(e.target.value)} />
              </PropRow>
              <PropRow>
                <label htmlFor="corners">Selected corners</label>
                <TextInput id="corners" value={corners} onChange={e => setCorners(e.target.value)} />
              </PropRow>
              <Mark $inset="-2px 120px -4px 115px" />
            </PropRows>
          </Properties>
        </Panel>
      </DialogMain>
      <DialogButtons>
        <button>OK</button>
        <button>Apply</button>
        <button>Cancel</button>
      </DialogButtons>
    </Dialog>
  );
};

const App = () => (
  <Page>
    <GlobalStyle />
    <Header>
      <Texture id="brush-top" />
      <TitleRow>
        <Brand>
          <BrandName>
            <Idea>IDEA</Idea>
            <Statica>StatiCa<sup>®</sup></Statica>
            <Product>CONNECTION</Product>
          </BrandName>
          <Tagline>Calculate yesterday's estimates</Tagline>
        </Brand>
        <FileName>untitled.ideaCon</FileName>
        <WindowButtons>
          <WindowButton aria-label="Minimize"><Svg w={17}><path d="M5 12h7" stroke="#111" strokeWidth="2" /></Svg></WindowButton>
          <WindowButton aria-label="Maximize"><Svg w={17}><path d="M4.500 4.500h8v8h-8zM4 5h9" stroke="#111" strokeWidth="1.500" /></Svg></WindowButton>
          <WindowButton aria-label="Close" $close><Svg w={17}><path d="M5 4.500l7 8M12 4.500l-7 8" stroke="#111" strokeWidth="2" /></Svg></WindowButton>
        </WindowButtons>
      </TitleRow>
      <Tabs>
        {TABS.map(tab => <Tab key={tab} $active={tab === 'Design'}>{tab}</Tab>)}
      </Tabs>
    </Header>
    <Ribbon />
    <Main>
      <Viewport>
        <ViewBar>
          <ViewIcons>
            <ViewIcon $w={24} aria-label="Home"><HomeIcon /></ViewIcon>
            <ViewIcon $w={48} aria-label="Zoom window"><ZoomWindowIcon /></ViewIcon>
            <ViewIcon $w={26} aria-label="Zoom"><SearchIcon /></ViewIcon>
            <ViewIcon $w={46} aria-label="Pan"><MoveIcon /></ViewIcon>
            <ViewIcon $w={28} aria-label="Rotate"><RotateIcon /></ViewIcon>
            <ViewIcon $w={38} aria-label="Fit"><ExpandIcon /></ViewIcon>
            <ViewIcon $w={32} aria-label="Solid"><SolidIcon /></ViewIcon>
          </ViewIcons>
          <ViewMode $active>Solid</ViewMode>
          <ViewMode>Transparent</ViewMode>
          <ViewMode $gap={17}>Wireframe</ViewMode>
        </ViewBar>
        <Model />
      </Viewport>
      <Splitter />
      <PropertyPanel />
    </Main>
    <Footer>
      <Texture id="brush-bottom" />
      <dl>
        {STATUS.map(([term, text]) => (
          <div key={term}>
            <dt>{term}</dt>
            <dd>{text}</dd>
          </div>
        ))}
      </dl>
      <a href="#site">www.<span>ideastatica</span>.com</a>
    </Footer>
    <PlateEditor />
  </Page>
);

export default App;
